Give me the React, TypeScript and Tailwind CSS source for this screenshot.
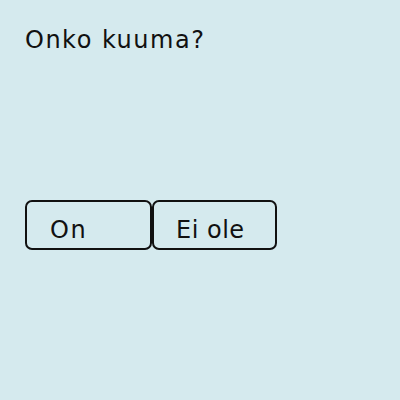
export default function App() {
  return (
    <div className="w-[400px] h-[400px] bg-[#d5eaee] text-[#111] font-['DejaVu_Sans',sans-serif] px-[25px] pt-[26px]">
      <div className="text-[24px] leading-[28px] tracking-[1.5px]">Onko kuuma?</div>
      <div className="flex mt-[146px]">
        <button className="w-[127px] h-[50px] border-2 border-[#111] rounded-[7px] text-left pl-[23px] pt-[14px] text-[24px] leading-[28px] tracking-[1.5px] flex items-start">
          On
        </button>
        <button className="w-[125px] h-[50px] border-2 border-[#111] rounded-[7px] text-left pl-[22px] pt-[14px] text-[24px] leading-[28px] tracking-[0.5px] flex items-start">
          Ei ole
        </button>
      </div>
    </div>
  );
}
